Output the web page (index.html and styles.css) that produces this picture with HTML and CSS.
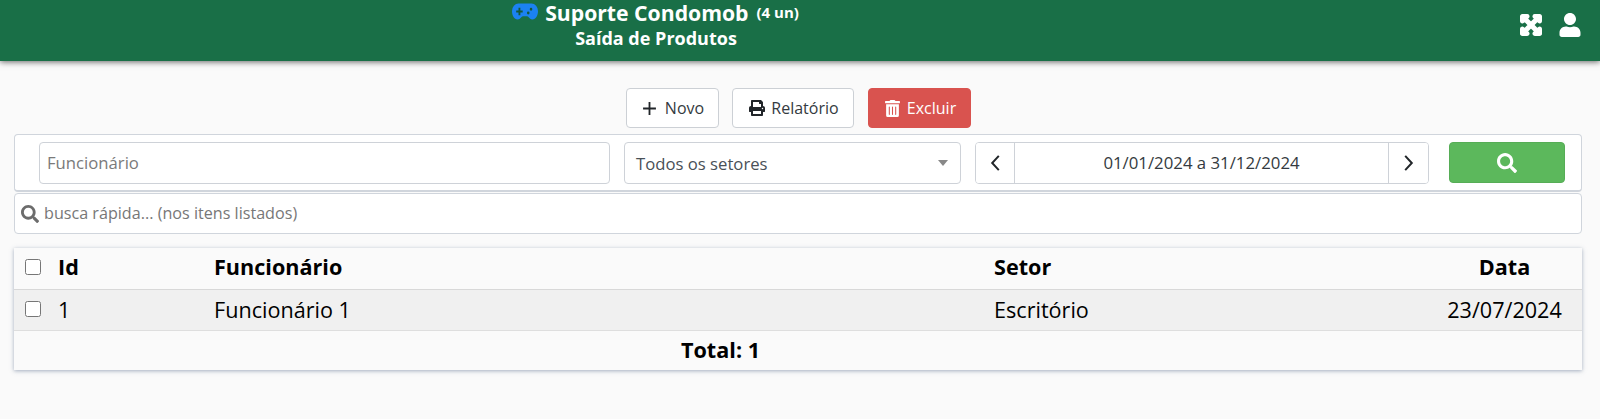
FILE: index.html
```html
<!DOCTYPE html>
<html lang="pt-BR">
<head>
<meta charset="utf-8">
<title>Saída de Produtos</title>
<link rel="stylesheet" href="styles.css">
</head>
<body>
<header class="topbar">
  <div class="title-block">
    <div class="title-line">
      <svg class="icon-gamepad" viewBox="0 0 28 16" preserveAspectRatio="none" aria-hidden="true">
        <path fill="#1b82f1" d="M7 .5h14a7 7 0 0 1 7 7c0 4.500-2.500 8-6 8-2 0-3-1-4-2-.6-.6-1.200-1-2-1h-4c-.8 0-1.400.4-2 1-1 1-2 2-4 2-3.500 0-6-3.500-6-8a7 7 0 0 1 7-7z"/>
        <path fill="#14583a" d="M7 4.500h2v2.500h2.500v2H9v2.500H7V9H4.500V7H7zM20.500 4.500a1.400 1.400 0 1 1 0 2.800 1.400 1.400 0 0 1 0-2.800zM17.500 8a1.400 1.400 0 1 1 0 2.800 1.400 1.400 0 0 1 0-2.800z"/>
      </svg>
      <span class="title-main">Suporte Condomob</span>
      <span class="title-count">(4 un)</span>
    </div>
    <div class="title-sub">Saída de Produtos</div>
  </div>
  <div class="top-actions">
    <svg class="icon-expand" viewBox="-30 2 508 508" aria-hidden="true"><path fill="#fff" stroke="#fff" stroke-width="60" d="M448 344v112a23.94 23.94 0 0 1-24 24H312c-21.39 0-32.09-25.9-17-41l36.2-36.2L224 295.6 116.77 402.9 153 439c15.09 15.1 4.39 41-17 41H24a23.94 23.94 0 0 1-24-24V344c0-21.4 25.89-32.1 41-17l36.19 36.2L184.46 256 77.18 148.7 41 185c-15.1 15.1-41 4.4-41-17V56a23.94 23.94 0 0 1 24-24h112c21.39 0 32.09 25.9 17 41l-36.2 36.2L224 216.4l107.23-107.3L295 73c-15.09-15.1-4.39-41 17-41h112a23.94 23.94 0 0 1 24 24v112c0 21.4-25.89 32.1-41 17l-36.19-36.2L263.54 256l107.28 107.3L407 327.1c15.1-15.2 41-4.5 41 16.9z"/></svg>
    <svg class="icon-user" viewBox="0 0 448 512" aria-hidden="true"><path fill="#fff" d="M224 256c70.7 0 128-57.3 128-128S294.7 0 224 0 96 57.3 96 128s57.3 128 128 128zm89.6 32h-16.7c-22.2 10.2-46.9 16-72.9 16s-50.6-5.8-72.9-16h-16.7C60.2 288 0 348.2 0 422.4V464c0 26.5 21.5 48 48 48h352c26.5 0 48-21.5 48-48v-41.6c0-74.2-60.2-134.4-134.4-134.4z"/></svg>
  </div>
</header>

<main class="content">
  <div class="toolbar">
    <button class="btn btn-novo" type="button">
      <svg class="btn-icon" viewBox="0 0 14 14" aria-hidden="true"><path d="M7 1v12M1 7h12" stroke="#212529" stroke-width="1.700" fill="none"/></svg>
      Novo
    </button>
    <button class="btn btn-rel" type="button">
      <svg class="btn-icon" viewBox="0 0 512 512" aria-hidden="true"><path fill="#212529" d="M448 192V77.25c0-8.49-3.37-16.62-9.37-22.63L393.37 9.37c-6-6-14.14-9.37-22.63-9.37H96C78.33 0 64 14.33 64 32v160c-35.35 0-64 28.65-64 64v112c0 8.84 7.16 16 16 16h48v96c0 17.67 14.33 32 32 32h320c17.67 0 32-14.33 32-32v-96h48c8.84 0 16-7.16 16-16V256c0-35.35-28.65-64-64-64zm-64 256H128v-96h256v96zm0-224H128V64h192v48c0 8.84 7.16 16 16 16h48v96zm48 72c-13.25 0-24-10.75-24-24 0-13.26 10.75-24 24-24s24 10.74 24 24c0 13.25-10.75 24-24 24z"/></svg>
      Relatório
    </button>
    <button class="btn btn-del" type="button">
      <svg class="btn-icon" viewBox="0 0 448 512" aria-hidden="true"><path fill="#fff" d="M32 464a48 48 0 0 0 48 48h288a48 48 0 0 0 48-48V128H32zm272-256a16 16 0 0 1 32 0v224a16 16 0 0 1-32 0zm-96 0a16 16 0 0 1 32 0v224a16 16 0 0 1-32 0zm-96 0a16 16 0 0 1 32 0v224a16 16 0 0 1-32 0zM432 32H312l-9.4-18.7A24 24 0 0 0 281.1 0H166.8a23.72 23.72 0 0 0-21.4 13.3L136 32H16A16 16 0 0 0 0 48v32a16 16 0 0 0 16 16h416a16 16 0 0 0 16-16V48a16 16 0 0 0-16-16z"/></svg>
      Excluir
    </button>
  </div>

  <section class="filters">
    <input class="field field-name" type="text" placeholder="Funcionário">
    <div class="field field-select">
      <span>Todos os setores</span>
      <span class="caret"></span>
    </div>
    <div class="date-group">
      <button class="date-nav date-prev" type="button"><svg viewBox="0 0 10 16" aria-hidden="true"><path d="M8 1.500 2 8l6 6.500" fill="none" stroke="#212529" stroke-width="1.800"/></svg></button>
      <div class="date-value">01/01/2024 a 31/12/2024</div>
      <button class="date-nav" type="button"><svg viewBox="0 0 10 16" aria-hidden="true"><path d="M2 1.500 8 8l-6 6.500" fill="none" stroke="#212529" stroke-width="1.800"/></svg></button>
    </div>
    <button class="btn-search" type="button">
      <svg viewBox="0 0 512 512" aria-hidden="true"><path fill="#fff" d="M505 442.7L405.3 343c-4.500-4.500-10.600-7-17-7H372c27.600-35.300 44-79.700 44-128C416 93.100 322.900 0 208 0S0 93.100 0 208s93.100 208 208 208c48.300 0 92.700-16.400 128-44v16.300c0 6.400 2.500 12.500 7 17l99.700 99.700c9.400 9.400 24.600 9.400 33.900 0l28.300-28.300c9.400-9.400 9.400-24.600.1-34zM208 336c-70.700 0-128-57.200-128-128 0-70.700 57.200-128 128-128 70.700 0 128 57.200 128 128 0 70.700-57.200 128-128 128z"/></svg>
    </button>
  </section>

  <div class="quick-search">
    <svg viewBox="0 0 512 512" aria-hidden="true"><path fill="#6c6c6c" d="M505 442.7L405.3 343c-4.500-4.500-10.600-7-17-7H372c27.600-35.300 44-79.700 44-128C416 93.100 322.900 0 208 0S0 93.100 0 208s93.100 208 208 208c48.300 0 92.700-16.400 128-44v16.300c0 6.400 2.500 12.500 7 17l99.700 99.700c9.400 9.400 24.600 9.400 33.900 0l28.300-28.300c9.400-9.400 9.400-24.600.1-34zM208 336c-70.700 0-128-57.200-128-128 0-70.700 57.200-128 128-128 70.700 0 128 57.200 128 128 0 70.700-57.200 128-128 128z"/></svg>
    <input class="quick-input" type="text" placeholder="busca rápida... (nos itens listados)">
  </div>

  <table class="grid">
    <colgroup>
      <col class="c-check"><col class="c-id"><col class="c-name"><col class="c-sector"><col class="c-date">
    </colgroup>
    <thead>
      <tr>
        <th class="cell-check"><input class="check" type="checkbox"></th>
        <th>Id</th>
        <th>Funcionário</th>
        <th>Setor</th>
        <th class="center">Data</th>
      </tr>
    </thead>
    <tbody>
      <tr>
        <td class="cell-check"><input class="check" type="checkbox"></td>
        <td>1</td>
        <td>Funcionário 1</td>
        <td>Escritório</td>
        <td class="center">23/07/2024</td>
      </tr>
    </tbody>
    <tfoot>
      <tr><td class="total" colspan="5">Total: 1</td></tr>
    </tfoot>
  </table>
</main>
</body>
</html>
```
FILE: styles.css
```css
* { box-sizing: border-box; }
html, body { margin: 0; padding: 0; }
body {
  background: #fafafa;
  font-family: "Open Sans", sans-serif;
  color: #212529;
  height: 419px;
  overflow: hidden;
}
.topbar {
  height: 61px;
  background: #196f47;
  box-shadow: 0 1px 6px rgba(0, 0, 0, .6);
  display: flex;
  color: #fff;
}
.title-block {
  width: 1312px;
  text-align: center;
  font-weight: 700;
}
.title-line {
  height: 25px;
  line-height: 25px;
  white-space: nowrap;
  display: flex;
  justify-content: center;
  align-items: center;
  padding-right: 1px;
}
.icon-gamepad { width: 26px; height: 17px; margin: -2px 7px 0 0; }
.title-main { font-size: 21.2px; margin-right: 8px; }
.title-count { font-size: 15px; }
.title-sub { font-size: 18px; line-height: 27px; }
.top-actions {
  flex: 1;
  display: flex;
  align-items: flex-start;
  padding: 14px 0 0 208px;
}
.icon-expand { width: 22px; height: 22px; }
.icon-user { width: 22px; height: 24px; margin: -1px 0 0 17px; }

.content { padding: 27px 18px 0 14px; }
.toolbar {
  display: flex;
  justify-content: center;
  gap: 13px;
  height: 40px;
  margin-bottom: 6px;
}
.btn {
  height: 40px;
  border: 1px solid #ccd0d5;
  border-radius: 4px;
  background: #fff;
  color: #343a40;
  font: 400 16px "Open Sans", sans-serif;
  display: flex;
  align-items: center;
  justify-content: center;
  gap: 8px;
  padding: 0;
}
.btn-icon { width: 16px; height: 16px; }
.btn-novo { width: 93px; padding-left: 2px; }
.btn-novo .btn-icon { width: 15px; height: 15px; }
.btn-rel { width: 122px; padding-left: 3px; gap: 6px; }
.btn-del { width: 103px; background: #d9534f; border-color: #d9534f; color: #fff; margin-left: 1px; padding-left: 3px; gap: 7px; }
.btn-del .btn-icon { width: 15px; height: 17px; }

.filters {
  height: 58px;
  background: #fff;
  border: 1px solid #d0d5dc;
  border-bottom-width: 2px;
  border-radius: 4px;
  display: flex;
  padding: 7px 16px 0 24px;
  align-items: flex-start;
}
.field {
  height: 42px;
  border: 1px solid #ced2d8;
  border-radius: 4px;
  background: #fff;
  font: 400 16.7px "Open Sans", sans-serif;
  color: #495057;
}
.field-name { width: 571px; padding: 0 7px 2px; outline: none; }
.field-name::placeholder { color: #7a7a7a; opacity: 1; font-size: 16.7px; }
.field-select {
  width: 337px;
  margin-left: 14px;
  padding: 0 12px 0 11px;
  display: flex;
  align-items: center;
  justify-content: space-between;
}
.caret {
  width: 0;
  height: 0;
  border-left: 5px solid transparent;
  border-right: 5px solid transparent;
  border-top: 6px solid #888;
}
.date-group {
  width: 454px;
  height: 42px;
  margin-left: 14px;
  display: flex;
  border: 1px solid #ced2d8;
  border-radius: 4px;
}
.date-nav {
  width: 39px;
  padding: 0;
  background: #fff;
  border: 0;
  border-radius: 3px;
  display: flex;
  align-items: center;
  justify-content: center;
}
.date-prev { width: 38px; }
.date-nav svg { width: 11px; height: 18px; }
.date-value {
  flex: 1;
  border-left: 1px solid #ced2d8;
  border-right: 1px solid #ced2d8;
  text-align: center;
  font-size: 16.8px;
  line-height: 40px;
  color: #343a40;
}
.btn-search {
  width: 116px;
  height: 41px;
  margin-left: 20px;
  background: #5cb85c;
  border: 1px solid #56ad56;
  border-radius: 4px;
  padding: 0;
  display: flex;
  align-items: center;
  justify-content: center;
}
.btn-search svg { width: 20px; height: 20px; }

.quick-search {
  height: 41px;
  margin-top: 1px;
  background: #fff;
  border: 1px solid #d0d5dc;
  border-radius: 4px;
  display: flex;
  align-items: center;
  padding-left: 6px;
}
.quick-search svg { width: 18px; height: 18px; flex: none; }
.quick-input {
  flex: 1;
  border: 0;
  outline: none;
  background: transparent;
  font: 400 16.15px "Open Sans", sans-serif;
  padding: 0 0 2px 5px;
}
.quick-input::placeholder { color: #777; opacity: 1; }

.grid {
  width: 100%;
  margin-top: 14px;
  border-collapse: collapse;
  table-layout: fixed;
  background: #fafafa;
  box-shadow: 0 1px 4px rgba(90, 110, 140, .55);
  color: #000;
  font-size: 21.6px;
}
.c-check { width: 44px; }
.c-id { width: 156px; }
.c-name { width: 780px; }
.c-sector { width: 416px; }
.c-date { width: auto; }
.grid th, .grid td { text-align: left; padding: 0; height: 41px; line-height: 27px; }
.grid thead th { border-bottom: 1px solid #d8d8d8; font-weight: 700; padding-bottom: 3px; }
.grid tbody td { background: #f0f0f0; border-bottom: 1px solid #dedede; font-weight: 400; }
.grid .cell-check { padding: 0 0 2px 11px; vertical-align: middle; }
.grid .center { text-align: center; padding-left: 17px; }
.grid .total { text-align: center; font-weight: 700; height: 40px; padding: 0 155px 2px 0; }
.check { display: block; width: 16px; height: 16px; margin: 0; }
```
